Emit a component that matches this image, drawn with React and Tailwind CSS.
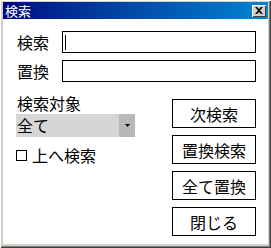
import React from 'react';

const jp = { fontFamily: '"Noto Sans CJK JP", "MS UI Gothic", sans-serif' };

const Btn = ({ children }) => (
  <button className="w-[84px] h-[29px] bg-white border border-black text-[16px] leading-none text-black flex items-center justify-center">
    {children}
  </button>
);

export default function App() {
  return (
    <div
      style={jp}
      className="w-[271px] h-[248px] bg-[#d4d0c8] px-[3px] pt-[2px] pb-[4px] flex flex-col shadow-[inset_1px_1px_#ffffff,inset_-1px_-1px_#404040,inset_-2px_-2px_#808080]"
    >
      {/* title bar */}
      <div className="h-[17px] flex items-center justify-between pl-[2px] pr-[2px] bg-gradient-to-r from-[#000080] to-[#1084d0]">
        <span className="text-white text-[13px] leading-none">検索</span>
        <div className="w-[14px] h-[12px] bg-[#d4d0c8] flex items-center justify-center shadow-[inset_1px_1px_#ffffff,inset_-1px_-1px_#404040]">
          <svg width="8" height="7" viewBox="0 0 8 7">
            <path d="M0 0h2l2 2 2-2h2L5 3.5 8 7H6L4 5 2 7H0l3-3.5z" fill="#000" />
          </svg>
        </div>
      </div>

      {/* body */}
      <div className="flex-1 bg-white pt-[12px] pl-[13px] pr-[12px] flex flex-col">
        <div className="flex items-center h-[22px]">
          <span className="w-[46px] pl-[1px] text-[16px] leading-none text-black">検索</span>
          <div className="flex-1 h-[22px] border border-black flex items-center pl-[2px]">
            <div className="w-px h-[15px] bg-black" />
          </div>
        </div>
        <div className="flex items-center h-[22px] mt-[7px]">
          <span className="w-[46px] pl-[1px] text-[16px] leading-none text-black">置換</span>
          <div className="flex-1 h-[22px] border border-black" />
        </div>

        <div className="flex justify-between mt-[11px]">
          <div className="flex flex-col w-[119px]">
            <span className="pl-[1px] text-[16px] leading-[20px] text-black">検索対象</span>
            <div className="mt-[1px] h-[23px] flex bg-[#d6d6d6]">
              <span className="flex-1 pl-[1px] text-[16px] leading-[23px] text-black">全て</span>
              <div className="w-[16px] h-full bg-[#b8b8b8] flex items-center justify-center">
                <svg width="5" height="3" viewBox="0 0 5 3">
                  <path d="M0 0h5L2.5 3z" fill="#000" />
                </svg>
              </div>
            </div>
            <div className="mt-[10px] flex items-center">
              <div className="w-[11px] h-[11px] border border-black" />
              <span className="ml-[5px] text-[16px] leading-none text-black">上へ検索</span>
            </div>
          </div>
          <div className="flex flex-col gap-[7px] pt-[6px]">
            <Btn>次検索</Btn>
            <Btn>置換検索</Btn>
            <Btn>全て置換</Btn>
            <Btn>閉じる</Btn>
          </div>
        </div>
      </div>
    </div>
  );
}
